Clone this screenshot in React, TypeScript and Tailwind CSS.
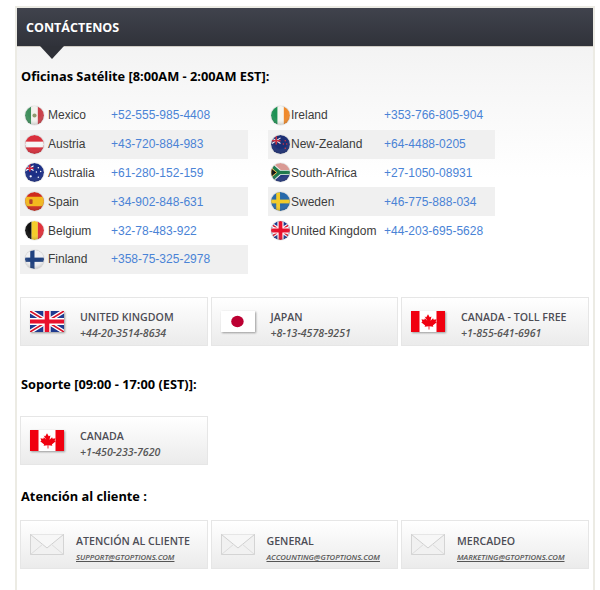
import type { ReactNode } from 'react';

const UkShapes = () => (
  <>
    <rect width="60" height="40" fill="#1f3a8f" />
    <path d="M0 0L60 40M60 0L0 40" stroke="#fff" strokeWidth="8" />
    <path d="M0 0L60 40M60 0L0 40" stroke="#d8122a" strokeWidth="3" />
    <path d="M30 0V40M0 20H60" stroke="#fff" strokeWidth="13" />
    <path d="M30 0V40M0 20H60" stroke="#e8112d" strokeWidth="8" />
  </>
);

const Leaf = () => (
  <path
    d="M30 6l3 6 3-1.500-1.500 8 4.500-4.500 1 2.500 5-1-1.500 5 2 1-7 6 1 2.500-7-1V35h-1.500v-6l-7 1 1-2.500-7-6 2-1-1.500-5 5 1 1-2.500 4.500 4.500L24 10.500l3 1.500z"
    fill="#f0000f"
  />
);

const ROUND_FLAGS: Record<string, ReactNode> = {
  mexico: (
    <>
      <rect width="6.500" height="20" fill="#3f8f5c" />
      <rect x="6.500" width="7" height="20" fill="#f2f2ee" />
      <rect x="13.500" width="6.500" height="20" fill="#c9414a" />
      <circle cx="10" cy="10" r="2.200" fill="#8f9a70" />
    </>
  ),
  austria: (
    <>
      <rect width="20" height="20" fill="#d92f3c" />
      <rect y="7" width="20" height="6" fill="#f6f6f6" />
    </>
  ),
  australia: (
    <>
      <rect width="20" height="20" fill="#1c2f86" />
      <path d="M1 3L9 8M9 3L1 8" stroke="#fff" strokeWidth="1.200" />
      <path d="M5 1V9M1 5.500H9" stroke="#d9243a" strokeWidth="1.600" />
      <circle cx="6" cy="14" r="1.200" fill="#fff" />
      <circle cx="14" cy="5" r="0.800" fill="#fff" />
      <circle cx="16.500" cy="9" r="0.800" fill="#fff" />
      <circle cx="12" cy="9.500" r="0.800" fill="#fff" />
      <circle cx="14" cy="15" r="0.800" fill="#fff" />
    </>
  ),
  spain: (
    <>
      <rect width="20" height="20" fill="#cf2b1e" />
      <rect y="5" width="20" height="10" fill="#f3b91e" />
      <rect x="4.500" y="7.500" width="3.500" height="5" rx="1" fill="#b3402a" />
    </>
  ),
  belgium: (
    <>
      <rect width="7" height="20" fill="#111" />
      <rect x="7" width="6.500" height="20" fill="#f3cc2a" />
      <rect x="13.500" width="6.500" height="20" fill="#e0313a" />
    </>
  ),
  finland: (
    <>
      <rect width="20" height="20" fill="#f0f0f2" />
      <rect x="5.500" width="4.500" height="20" fill="#20417f" />
      <rect y="8" width="20" height="4.500" fill="#20417f" />
    </>
  ),
  ireland: (
    <>
      <rect width="7" height="20" fill="#1f9254" />
      <rect x="7" width="6.500" height="20" fill="#f6f6f0" />
      <rect x="13.500" width="6.500" height="20" fill="#f08a2a" />
    </>
  ),
  newzealand: (
    <>
      <rect width="20" height="20" fill="#1c2f75" />
      <path d="M1 3L10 9M10 3L1 9" stroke="#e9e9ee" strokeWidth="1.200" />
      <path d="M5.500 1V10M1 6H10" stroke="#c9303f" strokeWidth="1.600" />
      <circle cx="15" cy="6" r="0.800" fill="#d9303f" />
      <circle cx="13" cy="9.500" r="0.800" fill="#d9303f" />
      <circle cx="16.500" cy="9.500" r="0.800" fill="#d9303f" />
      <circle cx="15" cy="14" r="0.800" fill="#d9303f" />
    </>
  ),
  southafrica: (
    <>
      <rect width="20" height="10" fill="#d99a94" />
      <rect y="10" width="20" height="10" fill="#24397f" />
      <path d="M0 2L9 10L0 18M9 10H20" stroke="#f2f2f2" strokeWidth="5.500" fill="none" />
      <path d="M0 2L9 10L0 18M9 10H20" stroke="#1f7a4d" strokeWidth="3.500" fill="none" />
      <path d="M0 5L6 10L0 15Z" fill="#111" stroke="#e8b93a" strokeWidth="1" />
    </>
  ),
  sweden: (
    <>
      <rect width="20" height="20" fill="#2769ab" />
      <rect x="5.500" width="4" height="20" fill="#f3cb28" />
      <rect y="8" width="20" height="4" fill="#f3cb28" />
    </>
  ),
  uk: (
    <g transform="scale(0.5) translate(-10 0)">
      <UkShapes />
    </g>
  ),
};

const RoundFlag = ({ name }: { name: string }) => (
  <svg viewBox="0 0 20 20" className="size-[19px] shrink-0 rounded-full shadow-[0_0_1px_#888]">
    <defs>
      <clipPath id={`clip-${name}`}>
        <circle cx="10" cy="10" r="10" />
      </clipPath>
      <radialGradient id={`shine-${name}`} cx="50%" cy="35%" r="70%">
        <stop offset="0.500" stopColor="#fff" stopOpacity="0" />
        <stop offset="1" stopColor="#000" stopOpacity="0.250" />
      </radialGradient>
    </defs>
    <g clipPath={`url(#clip-${name})`}>
      {ROUND_FLAGS[name]}
      <rect width="20" height="20" fill={`url(#shine-${name})`} />
    </g>
  </svg>
);

const LEFT_ROWS = [
  { flag: 'mexico', name: 'Mexico', phone: '+52-555-985-4408' },
  { flag: 'austria', name: 'Austria', phone: '+43-720-884-983' },
  { flag: 'australia', name: 'Australia', phone: '+61-280-152-159' },
  { flag: 'spain', name: 'Spain', phone: '+34-902-848-631' },
  { flag: 'belgium', name: 'Belgium', phone: '+32-78-483-922' },
  { flag: 'finland', name: 'Finland', phone: '+358-75-325-2978' },
];

const RIGHT_ROWS = [
  { flag: 'ireland', name: 'Ireland', phone: '+353-766-805-904' },
  { flag: 'newzealand', name: 'New-Zealand', phone: '+64-4488-0205' },
  { flag: 'southafrica', name: 'South-Africa', phone: '+27-1050-08931' },
  { flag: 'sweden', name: 'Sweden', phone: '+46-775-888-034' },
  { flag: 'uk', name: 'United Kingdom', phone: '+44-203-695-5628' },
];

const OfficeTable = ({ rows, right }: { rows: typeof LEFT_ROWS; right?: boolean }) => (
  <div className={`font-['Liberation_Sans',sans-serif] ${right ? 'ml-5 w-[227px]' : 'w-[228px]'}`}>
    {rows.map((row, i) => (
      <div
        key={row.name}
        className={`flex h-[28.800px] items-center ${right ? 'pl-[3px]' : 'pl-[5px]'} ${i % 2 ? 'bg-[#f0f0f0]' : ''}`}
      >
        <RoundFlag name={row.flag} />
        <span className={`text-[12px] text-[#3c3c3c] ${right ? 'ml-px w-[93px]' : 'ml-1 w-[63px]'}`}>{row.name}</span>
        <span className="text-[12px] text-[#4a83d6]">{row.phone}</span>
      </div>
    ))}
  </div>
);

const RectFlag = ({ kind }: { kind: 'uk' | 'japan' | 'canada' }) => (
  <svg viewBox="0 0 60 40" preserveAspectRatio="none" className="h-[21px] w-[34px] shrink-0 shadow-[1px_1px_2px_#999]">
    {kind === 'uk' && <UkShapes />}
    {kind === 'japan' && (
      <>
        <rect width="60" height="40" fill="#fff" />
        <circle cx="29" cy="20" r="11" fill="#bc0032" />
      </>
    )}
    {kind === 'canada' && (
      <>
        <rect width="60" height="40" fill="#fff" />
        <rect width="15" height="40" fill="#f0000f" />
        <rect x="45" width="15" height="40" fill="#f0000f" />
        <Leaf />
      </>
    )}
  </svg>
);

const Envelope = () => (
  <svg viewBox="0 0 34 21" className="h-[21px] w-[34px] shrink-0">
    <rect x="0.500" y="0.500" width="33" height="20" fill="#f1f1f1" stroke="#d4d4d4" />
    <path d="M0.500 0.500L17 14L33.500 0.500" fill="#f7f7f7" stroke="#d0d0d0" />
    <path d="M0.500 20.500L13 10M33.500 20.500L21 10" fill="none" stroke="#dcdcdc" />
  </svg>
);

const Card = ({ icon, title, children, mail }: { icon: ReactNode; title: string; children: ReactNode; mail?: boolean }) => (
  <div className="flex h-[49px] w-[187.500px] items-center border border-[#e6e6e6] bg-gradient-to-b from-white to-[#ebebeb] pl-[9px] font-['Open_Sans',sans-serif]">
    {icon}
    <div className={mail ? 'ml-3 mt-[9px]' : 'ml-4 mt-[7px]'}>
      <div className="text-[10.600px] font-semibold leading-[16px] text-[#4d4d55]">{title}</div>
      {children}
    </div>
  </div>
);

const Phone = ({ children }: { children: ReactNode }) => (
  <div className="text-[10.600px] font-semibold italic leading-[16px] text-[#555]">{children}</div>
);

const Email = ({ children }: { children: ReactNode }) => (
  <div className="text-[7.700px] font-semibold italic leading-[16px] text-[#555] underline">{children}</div>
);

const Heading = ({ children, className }: { children: ReactNode; className: string }) => (
  <h2 className={`pl-px font-['Open_Sans',sans-serif] text-[12.800px] font-bold leading-[18px] text-black ${className}`}>{children}</h2>
);

export default function App() {
  return (
    <div className="h-[590px] w-[600px] overflow-hidden bg-white pt-[6px]">
      <div className="ml-[15px] h-[600px] w-[580px] border-x-2 border-t-2 border-[#ecebe4] bg-gradient-to-b from-[#f0f0f0] to-white to-[170px]">
        <div className="relative h-[39px] border-b border-[#cfcbc4] bg-gradient-to-b from-[#40434d] to-[#30323a] pl-[9px] font-['Open_Sans',sans-serif] text-[12.500px] font-bold leading-[39px] text-white">
          CONTÁCTENOS
          <span className="absolute left-[23px] top-[38px] border-x-[12px] border-t-[13px] border-x-transparent border-t-[#2f3138]" />
        </div>
        <div className="pl-[3px]">
          <Heading className="mt-5">Oficinas Satélite [8:00AM - 2:00AM EST]:</Heading>
          <div className="mt-4 flex">
            <OfficeTable rows={LEFT_ROWS} />
            <OfficeTable rows={RIGHT_ROWS} right />
          </div>
          <div className="mt-[23px] flex gap-[3px]">
            <Card icon={<RectFlag kind="uk" />} title="UNITED KINGDOM"><Phone>+44-20-3514-8634</Phone></Card>
            <Card icon={<RectFlag kind="japan" />} title="JAPAN"><Phone>+8-13-4578-9251</Phone></Card>
            <Card icon={<RectFlag kind="canada" />} title="CANADA - TOLL FREE"><Phone>+1-855-641-6961</Phone></Card>
          </div>
          <Heading className="mt-[29px]">Soporte [09:00 - 17:00 (EST)]:</Heading>
          <div className="mt-[23px]">
            <Card icon={<RectFlag kind="canada" />} title="CANADA"><Phone>+1-450-233-7620</Phone></Card>
          </div>
          <Heading className="mt-[22px]">Atención al cliente :</Heading>
          <div className="mt-[15px] flex gap-[3px]">
            <Card mail icon={<Envelope />} title="ATENCIÓN AL CLIENTE"><Email>SUPPORT@GTOPTIONS.COM</Email></Card>
            <Card mail icon={<Envelope />} title="GENERAL"><Email>ACCOUNTING@GTOPTIONS.COM</Email></Card>
            <Card mail icon={<Envelope />} title="MERCADEO"><Email>MARKETING@GTOPTIONS.COM</Email></Card>
          </div>
        </div>
      </div>
    </div>
  );
}
